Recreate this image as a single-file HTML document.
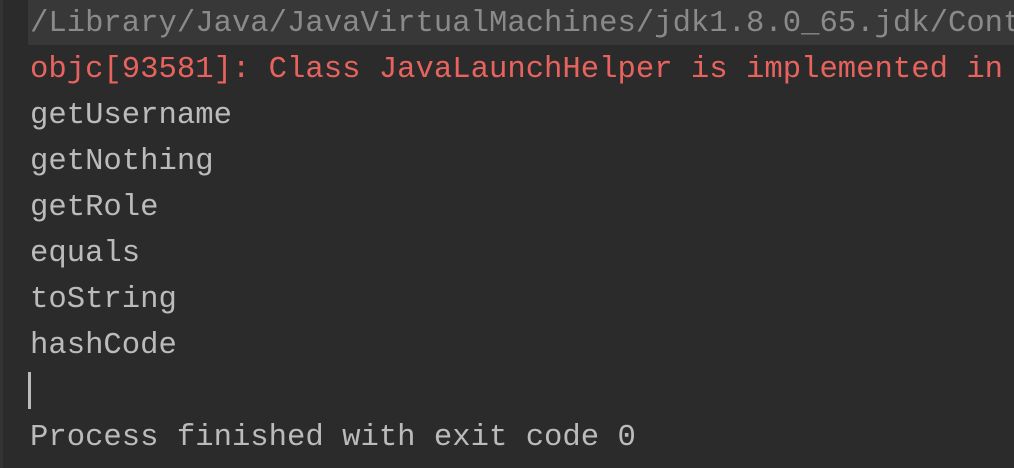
<!DOCTYPE html>
<html><head><meta charset="utf-8"><style>
html,body{margin:0;padding:0;width:1014px;height:468px;overflow:hidden;}
body{background:#2b2b2b;font-family:"Liberation Mono",monospace;font-size:30.6px;}
.wrap{position:relative;width:1014px;height:468px;overflow:hidden;}
.gut{position:absolute;left:0;top:0;width:3px;height:468px;background:#333;}
.hl{position:absolute;left:28px;top:0;width:986px;height:45px;background:#383838;}
.l{position:absolute;left:30px;right:0;height:46px;line-height:46px;white-space:pre;color:#bbbbbb;overflow:hidden;}
.cur{position:absolute;left:28px;top:372px;width:3px;height:37px;background:#bbbbbb;}
</style></head><body><div class="wrap">
<div class="gut"></div>
<div class="hl"></div>
<div class="l" style="top:1px;color:#8a8a8a">/Library/Java/JavaVirtualMachines/jdk1.8.0_65.jdk/Contents</div>
<div class="l" style="top:47px;color:#e8635e">objc[93581]: Class JavaLaunchHelper is implemented in both</div>
<div class="l" style="top:93px">getUsername</div>
<div class="l" style="top:139px">getNothing</div>
<div class="l" style="top:185px">getRole</div>
<div class="l" style="top:231px">equals</div>
<div class="l" style="top:277px">toString</div>
<div class="l" style="top:323px">hashCode</div>
<div class="cur"></div>
<div class="l" style="top:415px">Process finished with exit code 0</div>
</div></body></html>
